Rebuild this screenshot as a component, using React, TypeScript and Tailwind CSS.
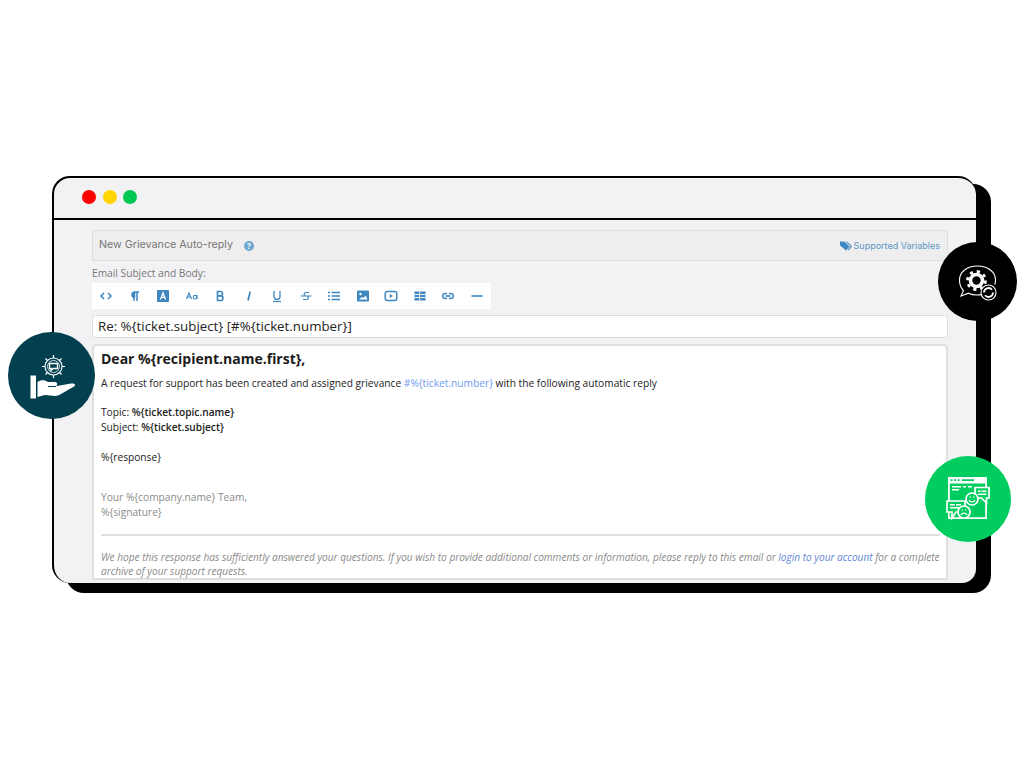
import React from "react";

const B = "#3f87c0";

function Tool({ children, w = 14 }: { children: React.ReactNode; w?: number }) {
  return (
    <svg width={w} height="14" viewBox="0 0 14 14" fill="none" stroke={B} strokeWidth="1.5" className="shrink-0">
      {children}
    </svg>
  );
}

const tools: React.ReactNode[] = [
  <Tool key="a"><path d="M5 4 L2 7 L5 10 M9 4 L12 7 L9 10" /></Tool>,
  <Tool key="b"><path d="M6 3h5M6 3v9M9 3v9" /><path d="M6.500 3.200a2.500 2.500 0 0 0 0 5z" fill={B} /></Tool>,
  <Tool key="c">
    <rect x="1" y="1" width="12" height="12" rx="1" fill={B} stroke="none" />
    <path d="M4.500 10.500 L7 3.800 L9.500 10.500 M5.500 8.300h3" stroke="#fff" strokeWidth="1.300" />
  </Tool>,
  <Tool key="d">
    <path d="M1.500 10 L4 4 L6.500 10 M2.500 8h3" strokeWidth="1.200" />
    <circle cx="10" cy="8.200" r="1.800" strokeWidth="1.100" />
    <path d="M12 6v4" strokeWidth="1.100" />
  </Tool>,
  <Tool key="e"><path d="M4.500 2.500v9h3.200a2.300 2.300 0 0 0 0-4.600H4.500h2.800a2.200 2.200 0 0 0 0-4.400z" strokeWidth="1.600" /></Tool>,
  <Tool key="f"><path d="M8.200 2.500 L6 11.500" strokeWidth="1.700" /></Tool>,
  <Tool key="g"><path d="M4 2v5.500a3 3 0 0 0 6 0V2" strokeWidth="1.300" /><path d="M3 12.500h8" strokeWidth="1.200" /></Tool>,
  <Tool key="h"><path d="M10 3.500H6.500a1.800 1.800 0 0 0 0 3.500h1.500a1.800 1.800 0 0 1 0 3.500H4M1.500 7h11" strokeWidth="1.200" /></Tool>,
  <Tool key="i"><path d="M4.500 3.500H13M4.500 7H13M4.500 10.500H13M1 3.500h2M1 7h2M1 10.500h2" strokeWidth="1.300" /></Tool>,
  <Tool key="j">
    <rect x="1" y="1.500" width="12" height="11" rx="1" fill={B} stroke="none" />
    <circle cx="4.500" cy="5" r="1.200" fill="#fff" stroke="none" />
    <path d="M3 10.500 L6 8 L7.500 9 L9.500 6.500 L11.500 10.500z" fill="#fff" stroke="none" />
  </Tool>,
  <Tool key="k">
    <rect x="1.200" y="2.500" width="11.600" height="9" rx="2.200" strokeWidth="1.500" />
    <path d="M5.800 5 L9 7 L5.800 9z" fill={B} stroke="none" />
  </Tool>,
  <Tool key="l">
    <path d="M1.500 2.500h11v9h-11z" fill={B} stroke="none" />
    <path d="M1.500 5.500h11M1.500 8.500h11M6.500 2.500v9" stroke="#fff" strokeWidth="0.900" />
  </Tool>,
  <Tool key="m"><path d="M6 4.500H4.200a2.500 2.500 0 0 0 0 5H6M8 4.500h1.800a2.500 2.500 0 0 1 0 5H8M4.500 7h5" strokeWidth="1.400" /></Tool>,
  <Tool key="n"><path d="M1.500 7h11" strokeWidth="1.600" /></Tool>,
];

export default function App() {
  return (
    <div className="relative w-[1024px] h-[768px] overflow-hidden bg-white pt-[176px] pl-[52px] font-['Open_Sans',sans-serif]">
      <div className="relative w-[924px] h-[407px]">
        <div className="absolute left-[14px] top-[8px] w-[925px] h-[409px] rounded-[18px] bg-black" />
        <div className="relative flex h-full flex-col overflow-hidden rounded-t-[18px] rounded-bl-[18px] rounded-br-[14px] border-2 border-b-0 border-r-0 border-black bg-[#f2f2f4]">
          <div className="flex h-[38px] shrink-0 items-center gap-[6.500px] border-b-2 border-black pl-[28px] pb-[2px] box-content">
            <span className="h-[14px] w-[14px] rounded-full bg-[#ff0000]" />
            <span className="h-[14px] w-[14px] rounded-full bg-[#ffd400]" />
            <span className="h-[14px] w-[14px] rounded-full bg-[#00c853]" />
          </div>
          <div className="flex min-h-0 flex-1 flex-col pl-[38px] pr-[28px] pt-[10px]">
            <div className="flex h-[31px] shrink-0 items-center border border-[#dedede] bg-[#eeeeee] pl-[6px] pr-[7px]">
              <span className="text-[10.700px] text-[#777777] font-['Inter',sans-serif]">New Grievance Auto-reply</span>
              <span className="ml-[11px] flex h-[10px] w-[10px] items-center justify-center rounded-full bg-[#6ea6d0] text-[8px] font-bold leading-none text-white">?</span>
              <svg width="12" height="10" viewBox="0 0 12 10" className="ml-auto mr-[2px]">
                <path d="M0 .500h4.500L9.500 5.500 6 9.500 0 4.500z" fill="#3f87c0" />
                <path d="M6 .500h1.200L12 5.500 8.500 9.500 7.600 8.800 10.500 5.500z" fill="#3f87c0" />
              </svg>
              <span className="text-[9px] text-[#5b97c8] font-['Inter',sans-serif]">Supported Variables</span>
            </div>
            <div className="mt-[5px] h-[15px] shrink-0 text-[10.200px] leading-[15px] text-[#777777]">Email Subject and Body:</div>
            <div className="mt-[2px] flex h-[26px] w-[399px] shrink-0 items-center gap-[14.500px] bg-white pl-[7px]">
              {tools}
            </div>
            <div className="mt-[6px] flex h-[23px] shrink-0 items-center rounded-[3px] border border-[#dcdcdc] bg-white pl-[5px] text-[13.300px] text-[#222222]">
              Re: %&#123;ticket.subject&#125; [#%&#123;ticket.number&#125;]
            </div>
            <div className="mt-[6px] h-[236px] shrink-0 overflow-hidden rounded-t-[5px] border-2 border-[#dfdfdf] bg-white pl-[7px] pr-[6px]">
              <div className="pt-[2px] text-[14px] font-bold leading-[22px] text-[#1c1c1c]">Dear %&#123;recipient.name.first&#125;,</div>
              <div className="mt-[6px] text-[10.200px] leading-[15px] text-[#222222]">
                <div>A request for support has been created and assigned grievance <span className="text-[#6f9cf0]">#%&#123;ticket.number&#125;</span> with the following automatic reply</div>
                <div className="h-[14px]" />
                <div>Topic: <b className="font-semibold">%&#123;ticket.topic.name&#125;</b></div>
                <div>Subject: <b className="font-semibold">%&#123;ticket.subject&#125;</b></div>
                <div className="h-[15px]" />
                <div>%&#123;response&#125;</div>
                <div className="h-[25px]" />
                <div className="text-[#8a8a8a]">Your %&#123;company.name&#125; Team,</div>
                <div className="text-[#8a8a8a]">%&#123;signature&#125;</div>
              </div>
              <div className="mt-[14px] h-[2px] bg-[#dfdfdf]" />
              <div className="mt-[14px] text-[10.080px] italic leading-[14px] text-[#8a8a8a]">
                We hope this response has sufficiently answered your questions. If you wish to provide additional comments or information, please reply to this email or <span className="text-[#5f86d6]">login to your account</span> for a complete archive of your support requests.
              </div>
            </div>
          </div>
        </div>
      </div>

      <div className="absolute left-[8px] top-[332px] flex h-[87px] w-[87px] items-center justify-center rounded-full bg-[#023f4f]">
        <svg width="50" height="50" viewBox="0 0 50 50" fill="none" stroke="#fff">
          <circle cx="26.500" cy="15.500" r="8.500" strokeWidth="1.200" />
          <circle cx="26.500" cy="15.500" r="6" strokeWidth="0.800" />
          <path d="M26.500 4v3M26.500 24v3M15 15.500h3M35 15.500h3M18.500 7.500l2 2M34.500 7.500l-2 2M18.500 23.500l2-2M34.500 23.500l-2-2" strokeWidth="1.200" />
          <path d="M22.500 12.500h8v5h-4.500l-2 2v-2h-1.500z" strokeWidth="1.400" />
          <path d="M3.500 24.500h5.500v23H3.500z" fill="#fff" stroke="none" />
          <path d="M10.500 31C14 28.500 18 29 21 31L28 31C31 31 31 35 28 35L22 35 30 35 44 32.500C48 32 49 34 47 35.500L34 43Q31 45 28 45L18 44 10.500 46z" fill="#fff" stroke="none" />
          <path d="M21 35.500h8" stroke="#023f4f" strokeWidth="1" />
        </svg>
      </div>

      <div className="absolute left-[938px] top-[242px] flex h-[79px] w-[79px] items-center justify-center rounded-full bg-black">
        <svg width="42" height="38" viewBox="0 0 42 38" fill="none" stroke="#fff">
          <path d="M25 31.500c-2 .4-3.500.5-5 .5-3 0-6-.6-8.500-1.800L4 33l2.500-5.500C3.800 25 2.500 21.500 2.500 17 2.500 9 10 3 20.500 3S38.500 9 38.500 17c0 1.500-.2 3-.7 4.500" strokeWidth="1.100" />
          <circle cx="19.500" cy="17.500" r="6" strokeWidth="3.600" />
          <circle cx="19.500" cy="17.500" r="9" strokeWidth="2.800" strokeDasharray="3.200 3.870" />
          <circle cx="31.500" cy="29.500" r="7.500" fill="#000" strokeWidth="1.100" />
          <path d="M27 29.500a4.500 4.500 0 0 1 8-2.800M36 29.500a4.500 4.500 0 0 1-8 2.800" strokeWidth="1.800" />
        </svg>
      </div>

      <div className="absolute left-[925px] top-[456px] flex h-[86px] w-[86px] items-center justify-center rounded-full bg-[#00cc60]">
        <svg width="44" height="44" viewBox="0 0 44 44">
          <path d="M2 0h39v42H2z" fill="#fff" />
          <path d="M3.800 6.500h35.400V40.200H3.800z" fill="#00cc60" />
          <path d="M4.500 2.300h2v1.800h-2zM8 2.300h2v1.800H8zM11.500 2.300h2v1.800h-2zM16 2.300h12v1.800H16z" fill="#00cc60" />
          <path d="M6 9h9v1.500H6zM17 9h3v1.500h-3zM22 9h4v1.500h-4zM6 12h7v1.500H6z" fill="#fff" />
          <path d="M29 10.500h14v10.500h-2.500v5l-5-5h-6.500z" fill="#00cc60" stroke="#fff" strokeWidth="1.700" />
          <path d="M32 13.500h2.500v1.400H32zM35.500 13.500h5v1.400h-5zM32 16.500h8.500v1.400H32z" fill="#fff" />
          <circle cx="26" cy="22" r="6" fill="#00cc60" stroke="#fff" strokeWidth="1.700" />
          <path d="M23 23c1 2.500 5 2.500 6 0M23.500 20h1.500M27 20h1.500" stroke="#fff" strokeWidth="1.200" fill="none" />
          <path d="M1 24h18v11h-9l-4 6v-6H1z" fill="#00cc60" stroke="#fff" strokeWidth="1.700" />
          <path d="M4 27h5v1.400H4zM10 27h5v1.400h-5zM4 30h9v1.400H4z" fill="#fff" />
          <circle cx="18" cy="35" r="6" fill="#00cc60" stroke="#fff" strokeWidth="1.700" />
          <path d="M15 38c1-2.500 5-2.500 6 0M15.500 33h1.500M19 33h1.500" stroke="#fff" strokeWidth="1.200" fill="none" />
        </svg>
      </div>
    </div>
  );
}
